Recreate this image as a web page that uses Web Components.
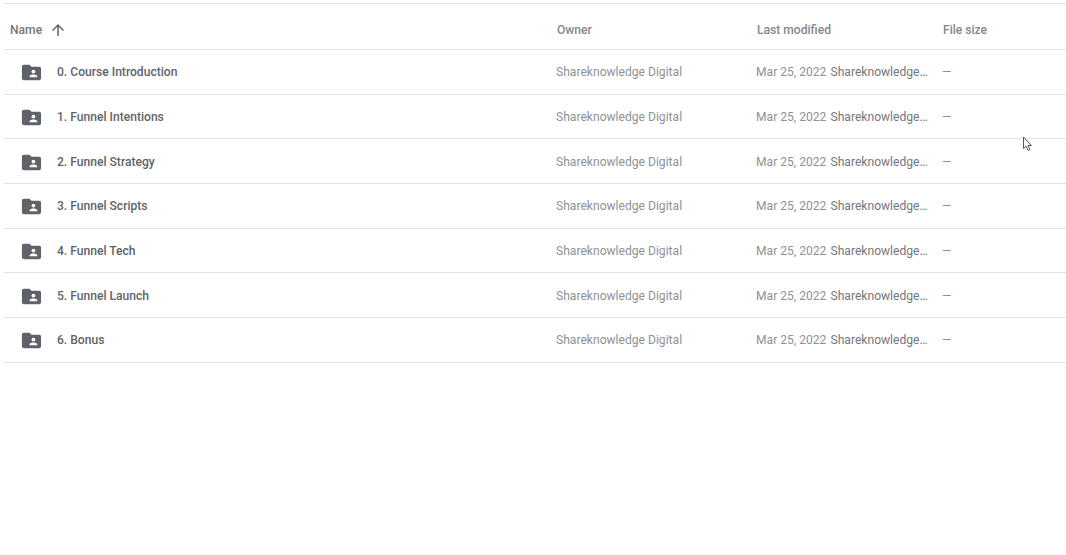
<!DOCTYPE html>
<html>
<head>
<meta charset="utf-8">
<style>
  html, body { margin: 0; height: 100%; background: #fff; overflow: hidden; }
  body { font-family: Roboto, "Liberation Sans", sans-serif; }
</style>
</head>
<body>
<file-list>
  <file-header></file-header>
  <file-row name="0. Course Introduction"></file-row>
  <file-row name="1. Funnel Intentions"></file-row>
  <file-row name="2. Funnel Strategy"></file-row>
  <file-row name="3. Funnel Scripts"></file-row>
  <file-row name="4. Funnel Tech"></file-row>
  <file-row name="5. Funnel Launch"></file-row>
  <file-row name="6. Bonus"></file-row>
</file-list>
<mouse-cursor></mouse-cursor>

<script>
const columns = "grid-template-columns: 552px 200px 74.5px 112.5px 1fr;";

class FileList extends HTMLElement {
  constructor() {
    super();
    this.attachShadow({ mode: "open" });
    this.shadowRoot.innerHTML = `
      <style>
        :host { display: block; margin: 3px 0 0 4px; border-top: 1px solid #e3e4e6; }
      </style>
      <slot></slot>`;
  }
}

class FileHeader extends HTMLElement {
  constructor() {
    super();
    this.attachShadow({ mode: "open" });
    this.shadowRoot.innerHTML = `
      <style>
        :host {
          display: grid;
          ${columns}
          align-items: center;
          box-sizing: border-box;
          height: 46px;
          padding-top: 7px;
          border-bottom: 1px solid #e3e4e6;
          font-size: 12.1px;
          font-weight: 500;
          color: #85878b;
        }
        .name { display: flex; align-items: center; gap: 7px; padding-left: 6px; color: #75777b; }
        .name svg { width: 18px; height: 18px; display: block; }
        .owner { padding-left: 1px; }
        .modified { padding-left: 1px; grid-column: span 2; }
      </style>
      <div class="name">Name
        <svg viewBox="0 0 24 24"><path fill="#5f6368" d="M4 12l1.41 1.41L11 7.83V20h2V7.83l5.58 5.59L20 12l-8-8-8 8z"/></svg>
      </div>
      <div class="owner">Owner</div>
      <div class="modified">Last modified</div>
      <div>File size</div>`;
  }
}

class FileRow extends HTMLElement {
  constructor() {
    super();
    this.attachShadow({ mode: "open" });
    const name = this.getAttribute("name");
    this.shadowRoot.innerHTML = `
      <style>
        :host {
          display: grid;
          ${columns}
          align-items: center;
          box-sizing: border-box;
          height: 44.67px;
          padding-top: 0.8px;
          border-bottom: 1px solid #e3e4e6;
          font-size: 12.1px;
          color: #8f9195;
        }
        .name { display: flex; align-items: center; gap: 14px; padding-left: 16px; font-weight: 500; color: #616367; }
        .name svg { width: 23px; height: 23px; display: block; flex: none; margin-top: 1px; }
        .by { color: #75777b; white-space: nowrap; }
        .dash { margin-left: -1px; }
      </style>
      <div class="name">
        <svg viewBox="0 0 24 24"><path fill="#5f6368" d="M20 6h-8l-2-2H4c-1.1 0-2 .9-2 2v12c0 1.1.9 2 2 2h16c1.1 0 2-.9 2-2V8c0-1.1-.9-2-2-2zm-6 3c1.1 0 2 .9 2 2s-.9 2-2 2-2-.9-2-2 .9-2 2-2zm4 8h-8v-1c0-1.33 2.67-2 4-2s4 .67 4 2v1z"/></svg>
        ${name}
      </div>
      <div>Shareknowledge Digital</div>
      <div>Mar 25, 2022</div>
      <div class="by">Shareknowledge…</div>
      <div class="dash">—</div>`;
  }
}

class MouseCursor extends HTMLElement {
  constructor() {
    super();
    this.attachShadow({ mode: "open" });
    this.shadowRoot.innerHTML = `
      <style>
        :host { position: absolute; left: 1022px; top: 136px; width: 11px; height: 16px; }
        svg { display: block; }
      </style>
      <svg width="11" height="16" viewBox="0 0 11 16"><path d="M1.5 1v11.5l2.6-2.3 2 4.3 1.8-.8-2-4.2h3.4z" fill="#fff" stroke="#55575b" stroke-width="1"/></svg>`;
  }
}

customElements.define("file-list", FileList);
customElements.define("file-header", FileHeader);
customElements.define("file-row", FileRow);
customElements.define("mouse-cursor", MouseCursor);
</script>
</body>
</html>
